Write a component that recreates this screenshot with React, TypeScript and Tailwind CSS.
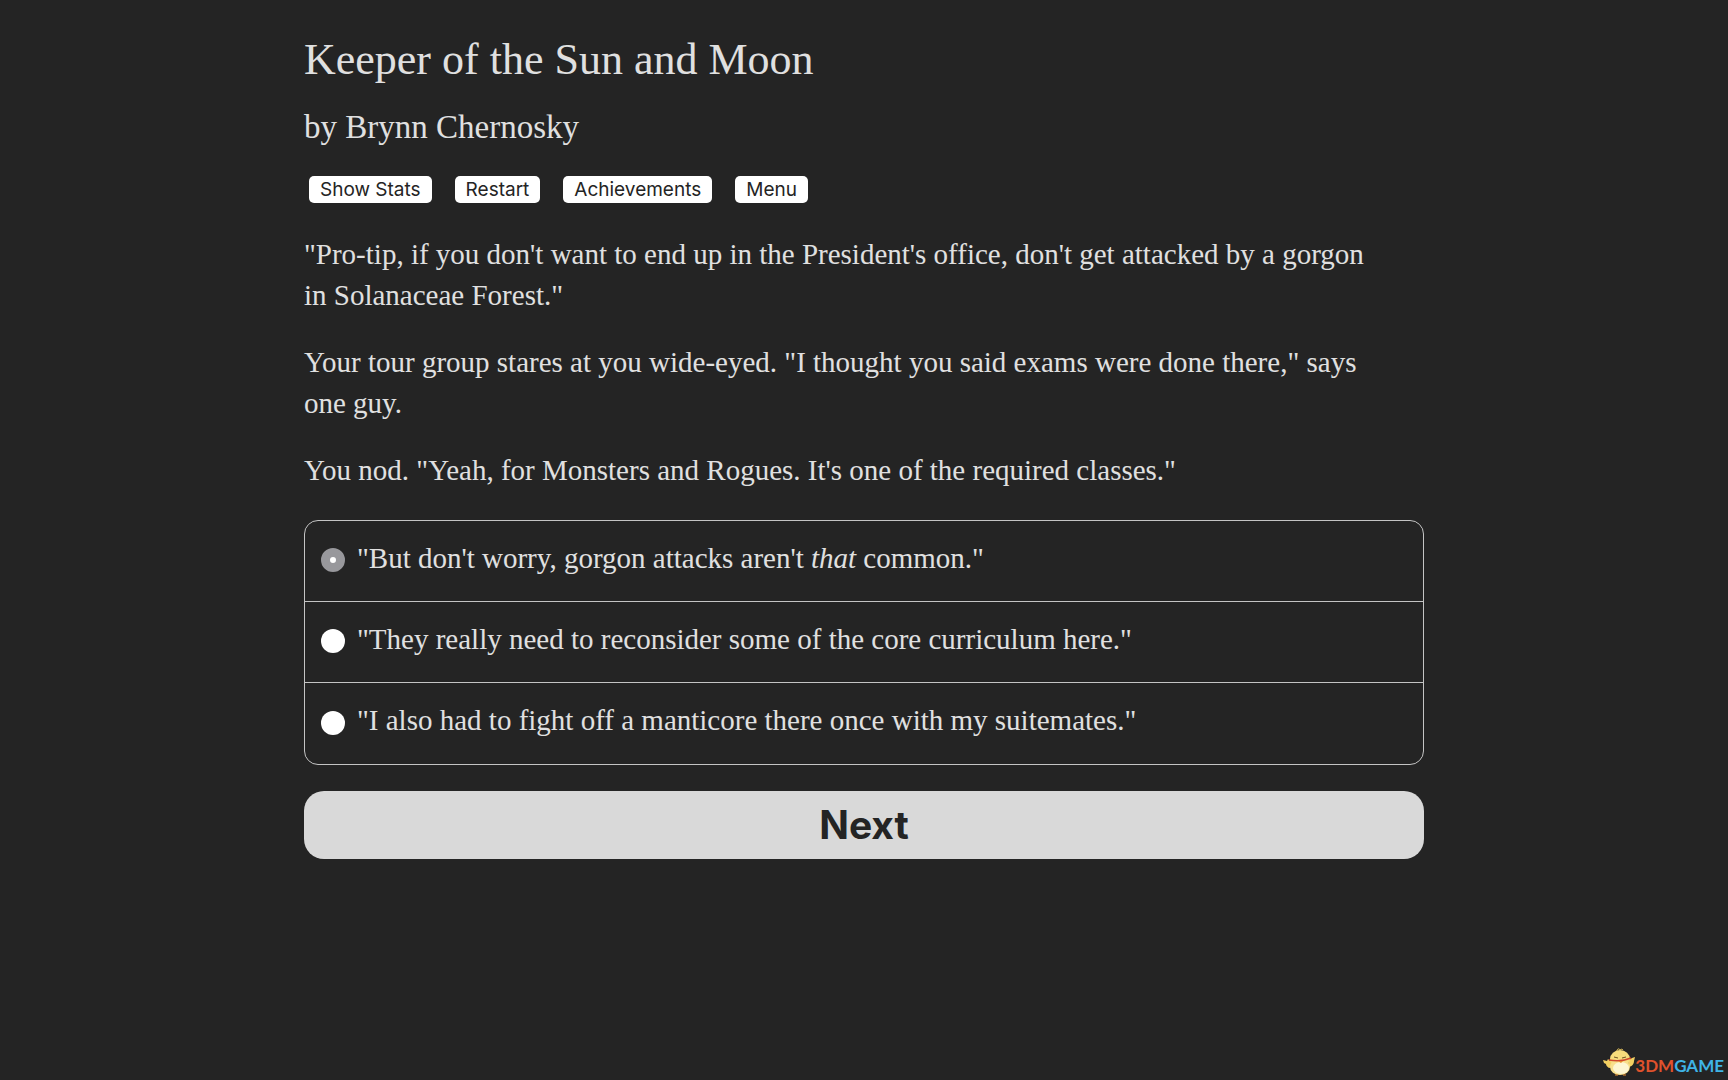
import React, { useState } from 'react';

const menuButtons = ['Show Stats', 'Restart', 'Achievements', 'Menu'];

const paragraphs = [
  `"Pro-tip, if you don't want to end up in the President's office, don't get attacked by a gorgon in Solanaceae Forest."`,
  `Your tour group stares at you wide-eyed. "I thought you said exams were done there," says one guy.`,
  `You nod. "Yeah, for Monsters and Rogues. It's one of the required classes."`,
];

const choices: React.ReactNode[] = [
  <>"But don't worry, gorgon attacks aren't <i>that</i> common."</>,
  <>"They really need to reconsider some of the core curriculum here."</>,
  <>"I also had to fight off a manticore there once with my suitemates."</>,
];

const ChickLogo: React.FC = () => (
  <svg viewBox="0 0 34 28" className="h-7 w-[34px]" aria-hidden="true">
    <path d="M2 12l4 1 1-2 2 2 3-1 1 7-5 1c-2-1-3-3-3-4l-2-1z" fill="#f3cf62" />
    <path d="M34 9l-3 1-3 2 0 7c4-1 5-4 5-6z" fill="#f3cf62" />
    <ellipse cx="19" cy="11" rx="10" ry="9" fill="#f6dc7c" />
    <ellipse cx="19" cy="19" rx="10" ry="8" fill="#f8e08c" />
    <ellipse cx="20" cy="20" rx="8" ry="6" fill="#fdf6d2" />
    <path d="M16 3c0-2 2-3 3-1M19 2c1-1 2-1 3 0" fill="none" stroke="#f3cf62" />
    <path d="M8 12c6 1 15 1 22-2" fill="none" stroke="#d0482c" strokeWidth="1.5" />
    <path d="M13 9l4 1M21 10l4-1" stroke="#6b5426" />
    <path d="M17 13h5l-2 2z" fill="#e98b2c" />
    <path d="M14 27h3M22 27h3" stroke="#e98b2c" />
  </svg>
);

const App: React.FC = () => {
  const [selected, setSelected] = useState(0);

  return (
    <div className='relative min-h-screen bg-[#242424] px-6 pt-9 text-[#e0e0e0] font-["Liberation_Serif",serif]'>
      <main className="mx-auto w-full max-w-[1120px]">
        <h1 className="text-[44px] leading-[48px]">Keeper of the Sun and Moon</h1>
        <h2 className="mt-6 text-[33px] leading-[38px]">by Brynn Chernosky</h2>

        <div className='mt-[30px] flex flex-wrap gap-[23px] px-[5px] font-["Inter",sans-serif]'>
          {menuButtons.map((label) => (
            <button key={label} className="rounded-[5px] bg-white px-[11px] pt-px text-[19px] leading-[26px] text-[#242424]">
              {label}
            </button>
          ))}
        </div>

        <div className="mt-[31px] space-y-[26px] pr-10 text-[29px] leading-[41px]">
          {paragraphs.map((text) => (
            <p key={text}>{text}</p>
          ))}
        </div>

        <form onSubmit={(e) => e.preventDefault()}>
          <div className="mt-[29px] divide-y divide-[#c4c4c4] rounded-[14px] border border-[#c4c4c4]">
            {choices.map((choice, i) => (
              <label key={i} className="flex min-h-[81px] items-center gap-3 px-4 pb-0.5 text-[29px] leading-[41px]">
                <input
                  type="radio"
                  name="choice"
                  checked={selected === i}
                  onChange={() => setSelected(i)}
                  className="size-6 shrink-0 appearance-none rounded-full bg-white checked:border-[9px] checked:border-[#98989c]"
                />
                <span className="pb-1">{choice}</span>
              </label>
            ))}
          </div>
          <button
            type="submit"
            className='mt-[26px] w-full rounded-[20px] bg-[#d9d9d9] text-[39px] font-bold leading-[68px] text-[#242424] font-["Inter",sans-serif]'
          >
            Next
          </button>
        </form>
      </main>

      <div className='absolute bottom-1 right-1 flex items-end font-["Lato",sans-serif]'>
        <ChickLogo />
        <span className="text-[17px] font-bold leading-5">
          <span className="text-[#e0522c]">3DM</span>
          <span className="text-[#3fb4e6]">GAME</span>
        </span>
      </div>
    </div>
  );
};

export default App;
